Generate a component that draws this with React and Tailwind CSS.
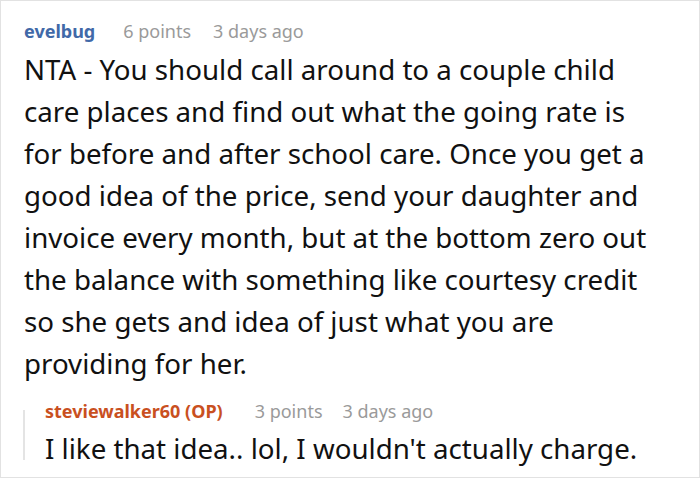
import React from 'react'

const font = { fontFamily: '"Noto Sans", sans-serif' }

const lines = [
  'NTA - You should call around to a couple child',
  'care places and find out what the going rate is',
  'for before and after school care. Once you get a',
  'good idea of the price, send your daughter and',
  'invoice every month, but at the bottom zero out',
  'the balance with something like courtesy credit',
  'so she gets and idea of just what you are',
  'providing for her.',
]

const App = () => {
  return (
    <div className="w-[700px] h-[478px] bg-white border border-[#e2e2e2] overflow-hidden" style={font}>
      {/* Top-level comment */}
      <div className="pl-[23px] pt-[16px]">
        <div className="flex items-baseline h-[28px] text-[18px] leading-[28px]">
          <span className="font-bold text-[#4169a8]">evelbug</span>
          <span className="ml-[28px] text-[#9a9a9a]">6 points</span>
          <span className="ml-[22px] text-[#9a9a9a]">3 days ago</span>
        </div>
        <div className="mt-[3px] text-[27.7px] leading-[42px] text-[#111] whitespace-nowrap">
          {lines.map((l, i) => (
            <div key={i}>{l}</div>
          ))}
        </div>
      </div>

      {/* Reply */}
      <div className="flex mt-[16px] ml-[22px]">
        <div className="w-[2px] h-[50px] mt-[10px] bg-[#e4e4e4]" />
        <div className="ml-[20px]">
          <div className="flex items-baseline text-[18px] leading-[22px] h-[22px]">
            <span className="font-bold text-[#c9501f]">steviewalker60 (OP)</span>
            <span className="ml-[32px] text-[#9a9a9a]">3 points</span>
            <span className="ml-[20px] text-[#9a9a9a]">3 days ago</span>
          </div>
          <p className="mt-[5px] text-[27.7px] leading-[42px] text-[#111] whitespace-nowrap">
            I like that idea.. lol, I wouldn't actually charge.
          </p>
        </div>
      </div>
    </div>
  )
}

export default App
